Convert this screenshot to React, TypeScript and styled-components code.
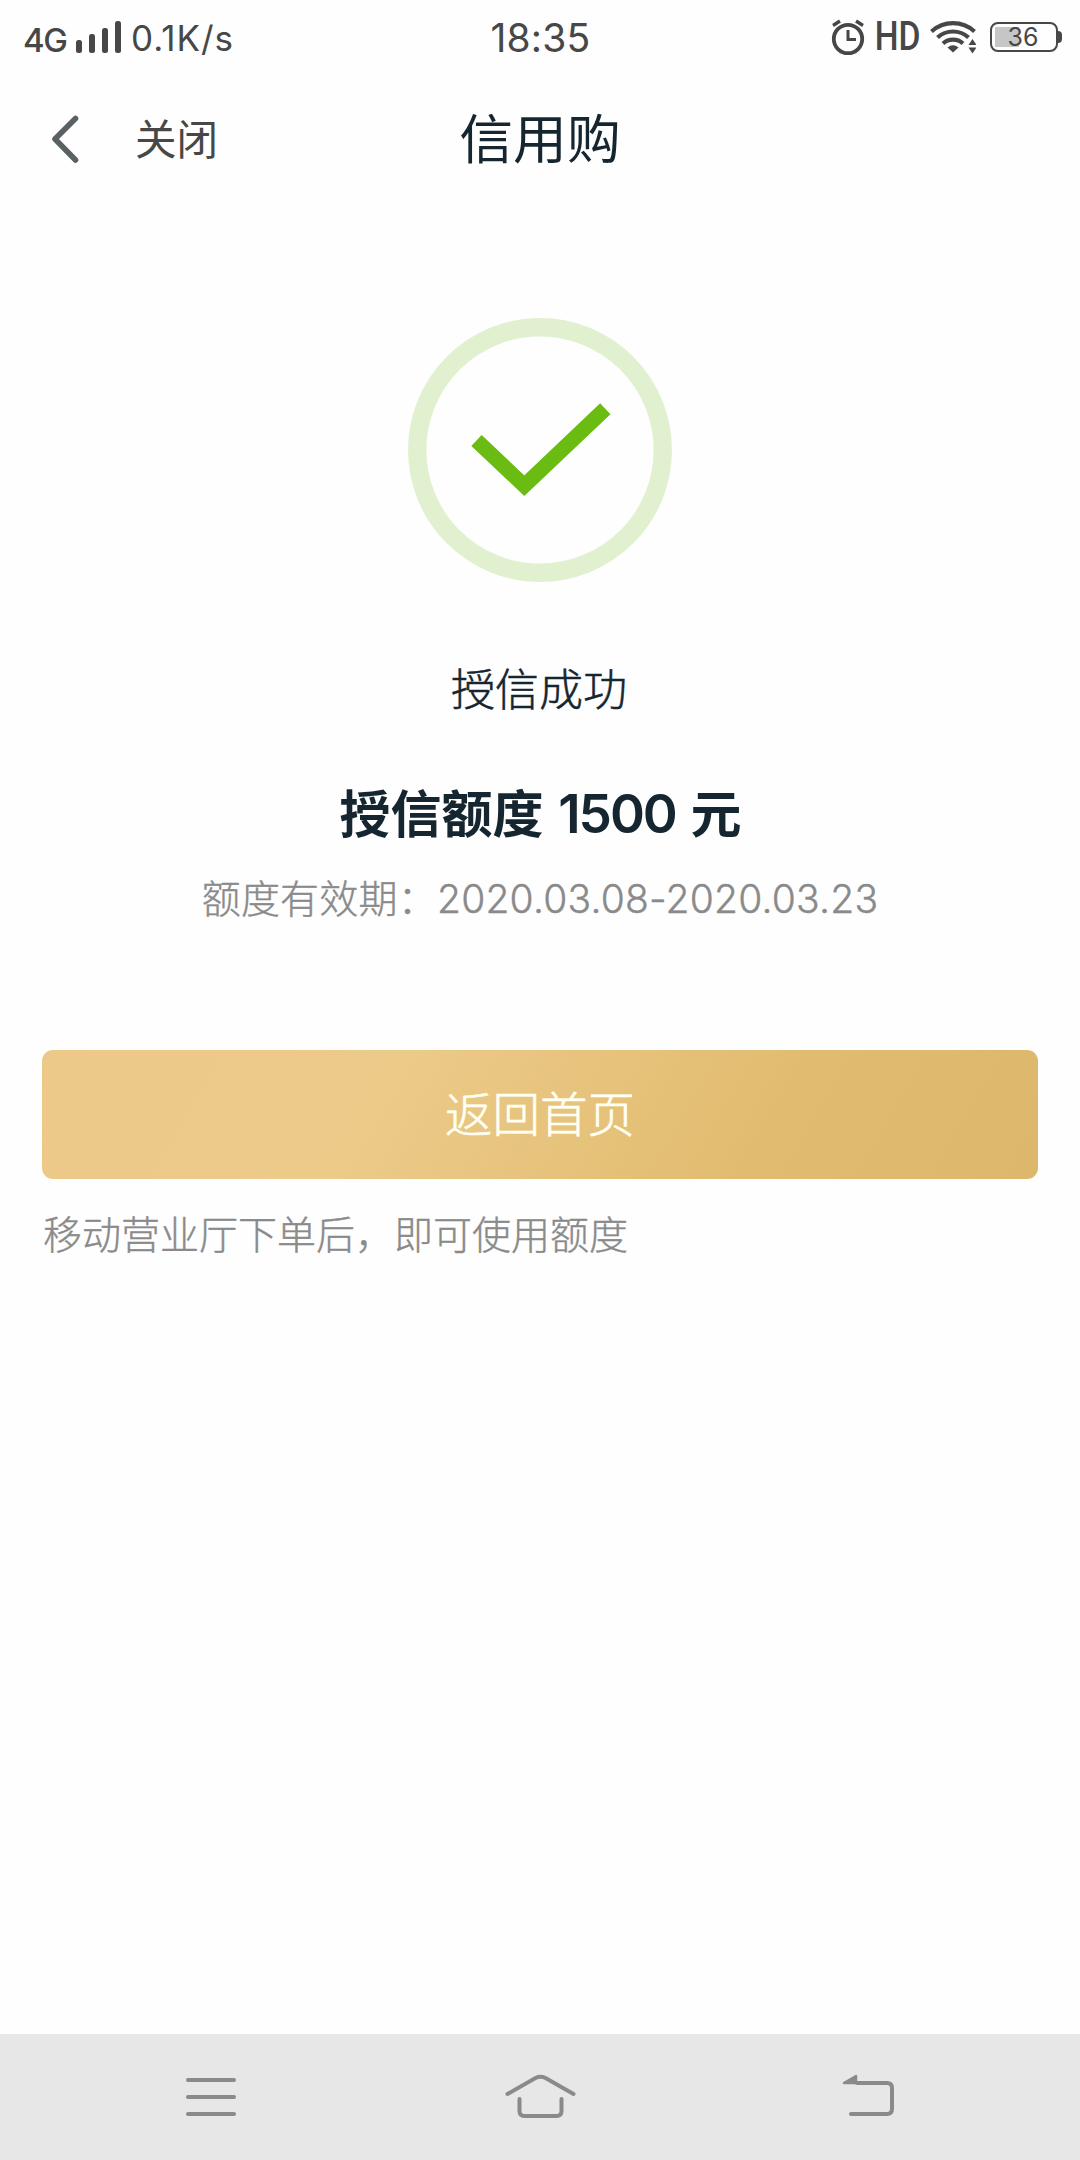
import React from "react";
import styled, { createGlobalStyle } from "styled-components";

const GlobalStyle = createGlobalStyle`
  body {
    margin: 0;
    background: #fefefe;
  }
`;

const Screen = styled.div`
  display: flex;
  flex-direction: column;
  width: 1080px;
  height: 2160px;
  overflow: hidden;
  background: #fefefe;
  color: #152630;
  font-family: Inter, "Noto Sans CJK SC", sans-serif;
  white-space: nowrap;
`;

const StatusBar = styled.header`
  display: grid;
  grid-template-columns: 1fr auto 1fr;
  align-items: center;
  height: 75px;
  padding: 0 18px 0 23px;
  color: #474747;
`;

const StatusGroup = styled.div<{ $end?: boolean }>`
  display: flex;
  align-items: center;
  justify-content: ${(p) => (p.$end ? "flex-end" : "flex-start")};
`;

const Network = styled.span`
  width: 43px;
  padding-top: 5px;
  font-size: 33px;
  line-height: 40px;
  font-weight: 550;
  letter-spacing: -1.4px;
`;

const SignalIcon = styled.svg`
  width: 46px;
  height: 34px;
  margin-left: 10px;
  margin-top: -2px;
`;

const Speed = styled.span`
  margin-left: 9px;
  font-size: 35px;
  line-height: 40px;
  letter-spacing: 1px;
`;

const Clock = styled.time`
  padding-right: 4px;
  font-size: 39px;
  line-height: 40px;
  font-weight: 430;
  letter-spacing: 0.2px;
`;

const StatusIcon = styled.svg<{ $w: number; $gap?: number }>`
  width: ${(p) => p.$w}px;
  height: 40px;
  margin-left: ${(p) => p.$gap ?? 0}px;
`;

const HdLabel = styled.span`
  display: inline-block;
  margin: -2px 0 0 1px;
  font-family: Roboto, sans-serif;
  font-size: 40px;
  line-height: 40px;
  font-weight: 500;
  transform: scaleX(0.84);
  transform-origin: right center;
`;

const Battery = styled.div`
  display: flex;
  align-items: center;
  margin: -2px 0 0 14px;
`;

const BatteryBody = styled.div`
  display: flex;
  align-items: center;
  justify-content: center;
  box-sizing: border-box;
  width: 68px;
  height: 30px;
  padding-right: 2px;
  border: 2px solid #474747;
  border-radius: 8px;
  background: linear-gradient(#c6c6c6, #c6c6c6) 3px 3px / 24px 20px no-repeat;
  font-size: 25px;
  line-height: 26px;
`;

const BatteryTip = styled.div`
  width: 4px;
  height: 12px;
  border-radius: 0 4px 4px 0;
  background: #474747;
`;

const TitleBar = styled.nav`
  display: grid;
  grid-template-columns: 1fr auto 1fr;
  align-items: center;
  height: 130px;
  padding: 0 50px;
`;

const TitleActions = styled.div`
  display: flex;
  align-items: center;
`;

const BackIcon = styled.svg`
  width: 30px;
  height: 50px;
`;

const CloseText = styled.span`
  margin-left: 55px;
  font-size: 41.5px;
  line-height: 48px;
  color: #474747;
`;

const Title = styled.h1`
  margin: 0;
  font-size: 53.8px;
  line-height: 60px;
  font-weight: 400;
`;

const Content = styled.main`
  display: flex;
  flex: 1;
  flex-direction: column;
  align-items: center;
  padding: 113px 42px 0;
`;

const SuccessIcon = styled.svg`
  width: 264px;
  height: 264px;
`;

const ResultText = styled.p`
  margin: 78px 2px 0 0;
  font-size: 44px;
  line-height: 60px;
  font-weight: 300;
  -webkit-text-stroke: 0.5px currentColor;
`;

const LimitText = styled.h2`
  margin: 59px 0 0;
  padding-left: 1px;
  font-size: 51px;
  line-height: 70px;
  font-weight: 700;
  word-spacing: 2.5px;
`;

const LimitAmount = styled.span`
  font-size: 53px;
  font-weight: 600;
  letter-spacing: -2px;
`;

const Validity = styled.p`
  margin: 24px 0 0;
  font-size: 39px;
  line-height: 50px;
  font-weight: 300;
  letter-spacing: 0.22px;
  color: #8a8a8a;
  -webkit-text-stroke: 0.4px currentColor;
`;

const HomeButton = styled.button`
  align-self: stretch;
  height: 129px;
  margin: 126px 0 0;
  padding: 0;
  border: 0;
  border-radius: 11px;
  background: linear-gradient(120deg, #ecc989 0%, #ecca88 34%, #e1bc70 72%, #ddb76b 100%);
  color: #fffff2;
  font-family: inherit;
  font-size: 47.5px;
  line-height: 60px;
  font-weight: 300;
  -webkit-text-stroke: 0.6px currentColor;
`;

const Hint = styled.p`
  align-self: flex-start;
  margin: 31px 0 0 1px;
  font-size: 39px;
  line-height: 50px;
  font-weight: 300;
  color: #8a8a8a;
  -webkit-text-stroke: 0.4px currentColor;
`;

const SystemNav = styled.footer`
  display: flex;
  justify-content: space-between;
  align-items: center;
  height: 126px;
  padding: 0 173px 0 176px;
  background: #e7e7e7;
`;

const NavIcon = styled.svg`
  width: 70px;
  height: 50px;
  fill: none;
  stroke: #8a8a8a;
  stroke-width: 4;
  stroke-linecap: round;
  overflow: visible;
`;

export default function App() {
  return (
    <>
      <GlobalStyle />
      <Screen>
        <StatusBar>
          <StatusGroup>
            <Network>4G</Network>
            <SignalIcon viewBox="0 0 46 34" fill="#474747">
              <rect x="0" y="20" width="6" height="13" rx="2.5" />
              <rect x="13" y="14" width="6" height="19" rx="2.5" />
              <rect x="26" y="8" width="6" height="25" rx="2.5" />
              <rect x="39" y="1" width="6" height="32" rx="2.5" />
            </SignalIcon>
            <Speed>0.1K/s</Speed>
          </StatusGroup>
          <Clock>18:35</Clock>
          <StatusGroup $end>
            <StatusIcon $w={34} viewBox="0 0 34 40" fill="none" stroke="#474747" strokeWidth="3.8">
              <circle cx="17" cy="21" r="14.2" />
              <path d="M17 12v9.5h8" strokeWidth="3" />
              <path d="M2 7.5l7-4.500M32 7.5l-7-4.500" strokeWidth="3.4" />
            </StatusIcon>
            <HdLabel>HD</HdLabel>
            <StatusIcon $w={46} $gap={10} viewBox="0 0 46 40" fill="none" stroke="#474747" strokeWidth="4.2">
              <path d="M1.5 13.5a32 32 0 0 1 43 0" />
              <path d="M7.5 19.5a23 23 0 0 1 31 0" />
              <path d="M13 25.5a15 15 0 0 1 20 0" />
              <path d="M23 34.5l-5.5-5q5.5-4.5 11 0z" fill="#474747" stroke="none" />
              <path d="M42.5 21l4 6h-8zM42.5 35.5l4-6h-8z" fill="#474747" stroke="none" />
            </StatusIcon>
            <Battery>
              <BatteryBody>36</BatteryBody>
              <BatteryTip />
            </Battery>
          </StatusGroup>
        </StatusBar>

        <TitleBar>
          <TitleActions>
            <BackIcon viewBox="0 0 30 50" fill="none" stroke="#596165" strokeWidth="5.6" strokeLinecap="round" strokeLinejoin="round">
              <path d="M25.5 3.5L5 24l20.5 21" />
            </BackIcon>
            <CloseText>关闭</CloseText>
          </TitleActions>
          <Title>信用购</Title>
          <span />
        </TitleBar>

        <Content>
          <SuccessIcon viewBox="0 0 264 264" fill="none">
            <circle cx="132" cy="132" r="122.8" stroke="#e1f1d0" strokeWidth="18.4" />
            <path d="M68.5 122.5l47.8 45.2 81-77" stroke="#6abb12" strokeWidth="15" />
          </SuccessIcon>
          <ResultText>授信成功</ResultText>
          <LimitText>
            授信额度 <LimitAmount>1500</LimitAmount> 元
          </LimitText>
          <Validity>额度有效期：2020.03.08-2020.03.23</Validity>
          <HomeButton type="button">返回首页</HomeButton>
          <Hint>移动营业厅下单后，即可使用额度</Hint>
        </Content>

        <SystemNav>
          <NavIcon viewBox="0 0 70 50">
            <path d="M12 8h46M12 25h46M12 42h46" />
          </NavIcon>
          <NavIcon viewBox="0 0 70 50">
            <path d="M0.5 22l28-16q5-2.5 10 0l28 16" />
            <path d="M12.5 27v12q0 5 5 5h32q5 0 5-5v-12" />
          </NavIcon>
          <NavIcon viewBox="0 0 70 50">
            <path d="M20 11h30q5 0 5 5v21q0 5-5 5h-36" />
            <path d="M7 11l12-7v7z" strokeWidth="2.5" fill="#8a8a8a" strokeLinejoin="round" />
          </NavIcon>
        </SystemNav>
      </Screen>
    </>
  );
}
